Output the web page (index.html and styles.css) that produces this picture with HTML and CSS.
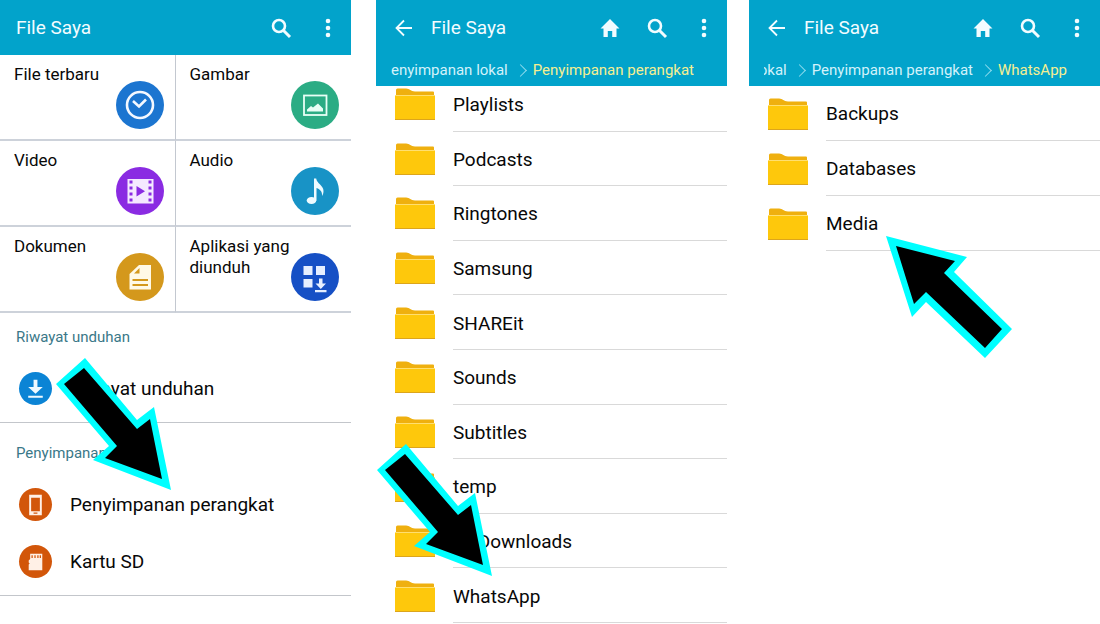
FILE: index.html
```
<!DOCTYPE html>
<html lang="id">
<head>
  <meta charset="UTF-8">
  <title>File Saya</title>
  <meta name="viewport" content="width=device-width, initial-scale=1.0">
  <link rel="stylesheet" href="styles.css">
</head>
<body>

<!-- shared icons -->
<svg class="sprite" aria-hidden="true">
  <symbol id="i-search" viewBox="0 0 24 24">
    <circle cx="10" cy="10" r="6" fill="none" stroke="currentColor" stroke-width="2.6"/>
    <path d="M14 14l7 7" stroke="currentColor" stroke-width="3"/>
  </symbol>
  <symbol id="i-more" viewBox="0 0 24 24">
    <circle cx="12" cy="5" r="2.3" fill="currentColor"/>
    <circle cx="12" cy="12" r="2.3" fill="currentColor"/>
    <circle cx="12" cy="19" r="2.3" fill="currentColor"/>
  </symbol>
  <symbol id="i-home" viewBox="0 0 24 24">
    <path d="M12 3L2.500 12.500H5.500V21h4.300v-6h4.400v6h4.300v-8.500h3z" fill="currentColor"/>
  </symbol>
  <symbol id="i-back" viewBox="0 0 24 24">
    <path d="M20 12H5M12 4.500L4.500 12l7.500 7.500" fill="none" stroke="currentColor" stroke-width="1.8"/>
  </symbol>
  <symbol id="i-folder" viewBox="0 0 40 34">
    <path d="M1 3Q1 1.500 2.500 1.500H11C15 1.500 15.500 4.500 20 4.500H38Q39 4.500 39 5.500V10H1z" fill="#efb00f"/>
    <rect y="8" width="40" height="25" rx="1" fill="#fec80c"/>
    <path d="M0 8.500h40" stroke="#ffdf70"/>
    <path d="M0 32.500h40" stroke="#dca51c"/>
  </symbol>
</svg>

<main class="screens">

  <section class="screen">
    <header class="bar">
      <h1>File Saya</h1>
      <button class="icon-btn" aria-label="Cari"><svg><use href="#i-search"/></svg></button>
      <button class="icon-btn" aria-label="Menu"><svg><use href="#i-more"/></svg></button>
    </header>

    <nav class="tiles">
      <a class="tile" href="#"><span>File terbaru</span>
        <svg class="tile-icon recent" viewBox="0 0 48 48">
          <circle cx="24" cy="24" r="13" fill="none" stroke="#f4f8ff" stroke-width="2.6"/>
          <path d="M17 20l6 5.500 7-7" fill="none" stroke="#f4f8ff" stroke-width="2.6"/>
        </svg>
      </a>
      <a class="tile" href="#"><span>Gambar</span>
        <svg class="tile-icon image" viewBox="0 0 48 48">
          <rect x="13" y="14.500" width="22.500" height="19.500" fill="none" stroke="#e8fff6" stroke-width="1.800"/>
          <path d="M16 30.500v-2l4-3.500 2 1.500 5-4 5 5v3z" fill="#e8fff6"/>
        </svg>
      </a>
      <a class="tile" href="#"><span>Video</span>
        <svg class="tile-icon video" viewBox="0 0 48 48">
          <path d="M11.500 12h26v24.500h-26z" fill="#f4e9ff"/>
          <path d="M20.500 19v10.500l8.500-5.200z" fill="#8a2be2"/>
          <path d="M15 13.500v22M34 13.500v22" stroke="#8a2be2" stroke-width="3" stroke-dasharray="3 3"/>
        </svg>
      </a>
      <a class="tile" href="#"><span>Audio</span>
        <svg class="tile-icon audio" viewBox="0 0 48 48">
          <ellipse cx="20.500" cy="33.500" rx="4.800" ry="3.500" fill="#eefbff"/>
          <path d="M23 33.500V11.500h2.200c.5 5 7.500 7 7.300 12.500 0 2-.7 4-1.500 5 .5-4-1.500-6.500-5.500-8v12.500z" fill="#eefbff"/>
        </svg>
      </a>
      <a class="tile" href="#"><span>Dokumen</span>
        <svg class="tile-icon document" viewBox="0 0 48 48">
          <path d="M23 12h12v24.500H13.500V21z" fill="#fff9e6"/>
          <path d="M23.500 15v5.500H18z" fill="#d4981c"/>
          <path d="M16.500 27H32M16.500 32H32" stroke="#d4981c" stroke-width="2"/>
        </svg>
      </a>
      <a class="tile" href="#"><span>Aplikasi yang diunduh</span>
        <svg class="tile-icon apps" viewBox="0 0 48 48">
          <path d="M12.500 13h9v9h-9zM25 13h9v9h-9zM12.500 26h9v8.500h-9zM28 25.500h3.500v5H35L29.800 36l-5.300-5.500H28zM24 37h11.500v2.200H24z" fill="#e6efff"/>
        </svg>
      </a>
    </nav>

    <section class="group">
      <h2>Riwayat unduhan</h2>
      <a class="entry" href="#">
        <svg class="entry-icon download" viewBox="0 0 34 34">
          <path d="M15 8h4v7.500h5.500L17 22.500l-7.500-7H15zM9.500 24.500h15v2h-15z" fill="#eef9ff"/>
        </svg>
        Riwayat unduhan
      </a>
    </section>

    <section class="group storages">
      <h2>Penyimpanan</h2>
      <a class="entry" href="#">
        <svg class="entry-icon storage" viewBox="0 0 34 34">
          <path d="M10.500 7h13v21h-13zM12.500 10v14h9V10zM15 25.300v1.200h4v-1.200z" fill="#fff0e6" fill-rule="evenodd"/>
        </svg>
        Penyimpanan perangkat
      </a>
      <a class="entry" href="#">
        <svg class="entry-icon storage" viewBox="0 0 34 34">
          <path d="M11.500 9H24v17H10v-6l1-1-1-1v-2l1.500-1.500z" fill="#fff0e6"/>
          <path d="M13.500 10.500v3M16.500 10.500v3M19.500 10.500v3M22 10.500v3" stroke="#d2560a" stroke-width="1.300"/>
        </svg>
        Kartu SD
      </a>
    </section>

    <svg class="pointer pointer-storage" viewBox="0 0 116 134" aria-hidden="true">
      <path d="M1 27L30 1 82 63 99 50 116 133 38 103 54 89z" fill="#0ff"/>
      <path d="M9 27L29 11 82 72 95 62 107 122 50 101 62 89z"/>
    </svg>
  </section>

  <section class="screen">
    <header class="bar">
      <button class="icon-btn back" aria-label="Kembali"><svg><use href="#i-back"/></svg></button>
      <h1>File Saya</h1>
      <button class="icon-btn" aria-label="Beranda"><svg><use href="#i-home"/></svg></button>
      <button class="icon-btn" aria-label="Cari"><svg><use href="#i-search"/></svg></button>
      <button class="icon-btn" aria-label="Menu"><svg><use href="#i-more"/></svg></button>
    </header>
    <nav class="crumbs">
      <div class="trail">
        <a href="#">Penyimpanan lokal</a>
        <a href="#" class="current">Penyimpanan perangkat</a>
      </div>
    </nav>
    <ul class="folders scrolled">
      <li><svg><use href="#i-folder"/></svg><a href="#">Playlists</a></li>
      <li><svg><use href="#i-folder"/></svg><a href="#">Podcasts</a></li>
      <li><svg><use href="#i-folder"/></svg><a href="#">Ringtones</a></li>
      <li><svg><use href="#i-folder"/></svg><a href="#">Samsung</a></li>
      <li><svg><use href="#i-folder"/></svg><a href="#">SHAREit</a></li>
      <li><svg><use href="#i-folder"/></svg><a href="#">Sounds</a></li>
      <li><svg><use href="#i-folder"/></svg><a href="#">Subtitles</a></li>
      <li><svg><use href="#i-folder"/></svg><a href="#">temp</a></li>
      <li><svg><use href="#i-folder"/></svg><a href="#">UCDownloads</a></li>
      <li><svg><use href="#i-folder"/></svg><a href="#">WhatsApp</a></li>
    </ul>

    <svg class="pointer pointer-whatsapp" viewBox="0 0 116 134" aria-hidden="true">
      <path d="M1 27L30 1 82 63 99 50 116 133 38 103 54 89z" fill="#0ff"/>
      <path d="M9 27L29 11 82 72 95 62 107 122 50 101 62 89z"/>
    </svg>
  </section>

  <section class="screen">
    <header class="bar">
      <button class="icon-btn back" aria-label="Kembali"><svg><use href="#i-back"/></svg></button>
      <h1>File Saya</h1>
      <button class="icon-btn" aria-label="Beranda"><svg><use href="#i-home"/></svg></button>
      <button class="icon-btn" aria-label="Cari"><svg><use href="#i-search"/></svg></button>
      <button class="icon-btn" aria-label="Menu"><svg><use href="#i-more"/></svg></button>
    </header>
    <nav class="crumbs">
      <div class="trail">
        <a href="#">lokal</a>
        <a href="#">Penyimpanan perangkat</a>
        <a href="#" class="current">WhatsApp</a>
      </div>
    </nav>
    <ul class="folders">
      <li><svg><use href="#i-folder"/></svg><a href="#">Backups</a></li>
      <li><svg><use href="#i-folder"/></svg><a href="#">Databases</a></li>
      <li><svg><use href="#i-folder"/></svg><a href="#">Media</a></li>
    </ul>

    <svg class="pointer pointer-media" viewBox="0 0 126 122" aria-hidden="true">
      <path d="M0 0L81 21 68 36 126 93 99 122 40 66 26 81z" fill="#0ff"/>
      <path d="M10 10L69 25 58 37 116 93 99 112 40 56 28 68z"/>
    </svg>
  </section>

</main>

</body>
</html>
```
FILE: styles.css
```
* {
  box-sizing: border-box;
}
body {
  margin: 0;
  font-family: Roboto, sans-serif;
  font-size: 19px;
  color: #080808;
  background: #fff;
}
a {
  color: inherit;
  text-decoration: none;
}
h1, h2 {
  margin: 0;
  font-weight: 400;
}
.sprite {
  display: none;
}
.screens {
  display: grid;
  grid-template-columns: 1fr 25px 1fr 22px 1fr;
  min-height: 100vh;
}
.screen {
  position: relative;
  display: flex;
  flex-direction: column;
  min-width: 0;
}
.screen:nth-child(2) {
  grid-column: 3;
}
.screen:nth-child(3) {
  grid-column: 5;
}

/* header */
.bar {
  display: flex;
  align-items: center;
  height: 55px;
  padding-left: 16px;
  background: #02a3cb;
  color: #f2fcff;
}
.bar h1 {
  flex: 1;
  font-size: 19px;
}
.icon-btn {
  display: flex;
  justify-content: center;
  width: 47px;
  padding: 0;
  border: none;
  background: none;
  color: inherit;
  cursor: pointer;
}
.icon-btn svg {
  width: 24px;
  height: 24px;
}
.icon-btn.back {
  justify-content: flex-start;
  width: 39px;
}
.crumbs {
  position: relative;
  z-index: 1;
  height: 31px;
  background: #02a3cb;
  padding: 0 33px 0 15px;
}
.trail {
  display: flex;
  justify-content: flex-end;
  overflow: hidden;
  color: #d3f2fa;
  font-size: 15px;
  line-height: 30px;
  white-space: nowrap;
}
.trail a {
  display: flex;
  flex-shrink: 0;
  align-items: center;
}
.trail a + a::before {
  content: "";
  width: 8px;
  height: 8px;
  margin: 0 8px 0 8px;
  border: solid #8fdcee;
  border-width: 1px 1px 0 0;
  transform: rotate(45deg);
}
.trail .current {
  color: #f6ef91;
}

/* category tiles */
.tiles {
  display: grid;
  grid-template-columns: 1fr 1fr;
}
.tile {
  display: flex;
  justify-content: space-between;
  height: 86px;
  padding: 9px 12px 0 14px;
  border-bottom: 2px solid #cdd2da;
  font-size: 17px;
  line-height: 21px;
}
.tile:nth-child(odd) {
  padding-right: 11px;
  border-right: 1px solid #c3c8d0;
}
.tile span {
  width: 0;
  flex: 1;
}
.tile-icon {
  width: 48px;
  height: 48px;
  margin-top: 17px;
  border-radius: 50%;
}
.recent { background: #1c75d0; }
.image { background: #2bac84; }
.video { background: #8a2be2; }
.audio { background: #1893c6; }
.document { background: #d4981c; }
.apps { background: #1650c5; }

/* list groups */
.group {
  padding: 14px 16px 5px;
  border-bottom: 1px solid #c3c6cb;
}
.group.storages {
  padding-top: 20px;
}
.group h2 {
  margin-bottom: 12px;
  color: #3a7888;
  font-size: 15px;
  line-height: 21px;
}
.entry {
  display: flex;
  align-items: center;
  gap: 18px;
  height: 57px;
  padding-left: 3px;
}
.entry-icon {
  width: 33px;
  height: 33px;
  border-radius: 50%;
}
.download { background: #0b84d5; }
.storage { background: #d2560a; }

/* folder lists */
.folders {
  display: flex;
  flex-direction: column;
  margin: 0;
  padding: 0;
  list-style: none;
}
.folders li {
  display: flex;
  align-items: stretch;
  height: 55px;
  padding-left: 19px;
  gap: 18px;
}
.folders svg {
  align-self: center;
  width: 40px;
  height: 34px;
}
.folders a {
  display: flex;
  flex: 1;
  align-items: center;
  border-bottom: 1px solid #d9d9d9;
}
/* first row is partly under the breadcrumbs */
.scrolled {
  flex: 1;
  margin-top: -9px;
  padding-bottom: 1px;
}
.scrolled li {
  flex: 1;
  height: auto;
}
.scrolled a {
  padding-top: 2px;
}

/* arrows drawn over the screens */
.pointer {
  position: absolute;
  z-index: 2;
}
.pointer-storage {
  left: 55px;
  top: 357px;
  width: 116px;
}
.pointer-whatsapp {
  left: 0;
  top: 443px;
  width: 116px;
}
.pointer-media {
  left: 137px;
  top: 236px;
  width: 126px;
}
```
